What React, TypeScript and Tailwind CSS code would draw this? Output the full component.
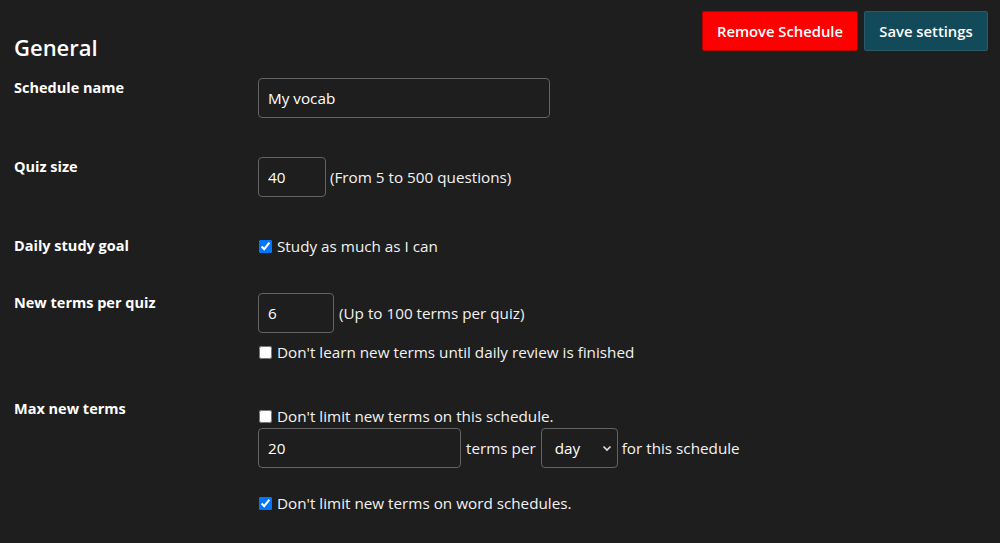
export default function App() {
  const font = { fontFamily: "'Open Sans', 'Noto Sans', sans-serif" };
  return (
    <div className="min-h-[543px] bg-[#1e1e1e] text-[#f2f2f2] px-[14px] text-[15.25px]" style={font}>
      <div className="flex items-start justify-between">
        <h2 className="mt-[31px] text-[22px] leading-[32px] font-semibold text-white">General</h2>
        <div className="mt-[11px] mr-[-2px] flex gap-[6px]">
          <button className="h-[40px] w-[156px] rounded-[2px] border border-[#b80000] bg-[#ff0000] text-[14.8px] font-semibold text-white">
            Remove Schedule
          </button>
          <button className="h-[40px] w-[124px] rounded-[2px] border border-[#2a5a68] bg-[#124a5a] text-[14.8px] font-semibold text-white">
            Save settings
          </button>
        </div>
      </div>

      {/* Schedule name */}
      <div className="mt-[15px] flex">
        <Label>Schedule name</Label>
        <input
          defaultValue="My vocab"
          className="h-[40px] w-[292px] rounded-[4px] border border-[#636363] bg-[#1e1e1e] px-[9px] text-white outline-none"
        />
      </div>

      {/* Quiz size */}
      <div className="mt-[39px] flex">
        <Label>Quiz size</Label>
        <div className="flex items-center gap-[4px]">
          <input
            defaultValue="40"
            className="h-[40px] w-[68px] rounded-[4px] border border-[#636363] bg-[#1e1e1e] px-[9px] text-white outline-none"
          />
          <span>(From 5 to 500 questions)</span>
        </div>
      </div>

      {/* Daily study goal */}
      <div className="mt-[39px] flex">
        <Label>Daily study goal</Label>
        <Check checked>Study as much as I can</Check>
      </div>

      {/* New terms per quiz */}
      <div className="mt-[37px] flex">
        <Label>New terms per quiz</Label>
        <div className="flex flex-col">
          <div className="flex items-center gap-[5px]">
            <input
              defaultValue="6"
              className="h-[40px] w-[76px] rounded-[4px] border border-[#636363] bg-[#1e1e1e] px-[9px] text-white outline-none"
            />
            <span>(Up to 100 terms per quiz)</span>
          </div>
          <div className="mt-[9px]">
            <Check>Don't learn new terms until daily review is finished</Check>
          </div>
        </div>
      </div>

      {/* Max new terms */}
      <div className="mt-[37px] flex">
        <Label>Max new terms</Label>
        <div className="flex flex-col">
          <div className="mt-[7px]">
            <Check>Don't limit new terms on this schedule.</Check>
          </div>
          <div className="mt-[2px] flex items-center">
            <input
              defaultValue="20"
              className="h-[40px] w-[203px] rounded-[4px] border border-[#636363] bg-[#1e1e1e] px-[9px] text-white outline-none"
            />
            <span className="ml-[5px] mr-[5px]">terms per</span>
            <div className="relative">
              <select className="h-[40px] w-[77px] appearance-none rounded-[4px] border border-[#636363] bg-[#1e1e1e] pl-[13px] text-white outline-none">
                <option>day</option>
                <option>week</option>
              </select>
              <svg
                className="pointer-events-none absolute right-[6px] top-[16px]"
                width="10"
                height="8"
                viewBox="0 0 10 8"
                fill="none"
                stroke="#e0e0e0"
                strokeWidth="1.6"
              >
                <path d="M1.5 2.5 L5 6 L8.5 2.5" />
              </svg>
            </div>
            <span className="ml-[4px]">for this schedule</span>
          </div>
          <div className="mt-[25px]">
            <Check checked>Don't limit new terms on word schedules.</Check>
          </div>
        </div>
      </div>
    </div>
  );
}

function Label({ children }: { children: React.ReactNode }) {
  return <div className="w-[244px] shrink-0 text-[14.5px] font-bold leading-[20px] text-white">{children}</div>;
}

function Check({ children, checked }: { children: React.ReactNode; checked?: boolean }) {
  return (
    <label className="flex h-[20px] items-center leading-[20px]">
      <input type="checkbox" defaultChecked={checked} className="m-0 ml-[1px] mr-[5px] h-[13px] w-[13px] accent-[#0075ff]" />
      <span>{children}</span>
    </label>
  );
}
